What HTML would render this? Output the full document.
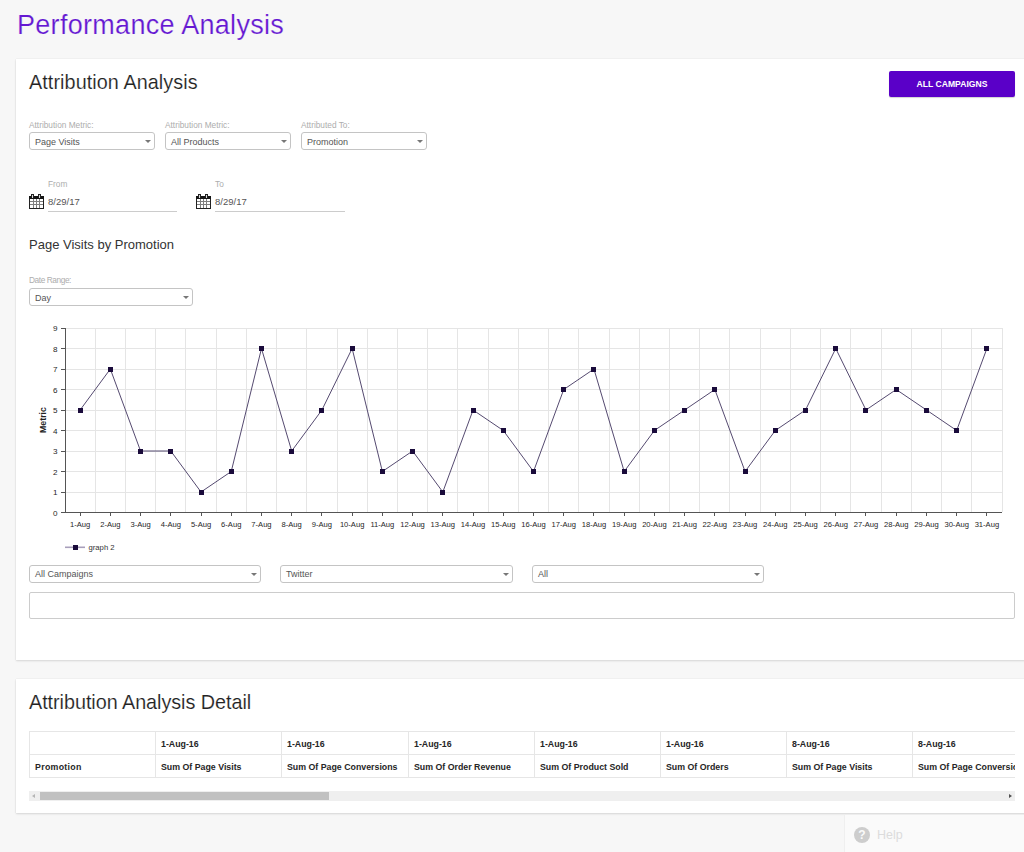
<!DOCTYPE html>
<html><head><meta charset="utf-8">
<style>
*{margin:0;padding:0;box-sizing:border-box}
html,body{width:1024px;height:852px;overflow:hidden;background:#f7f7f7;font-family:"Liberation Sans",sans-serif;color:#333}
.abs{position:absolute}
.t{position:absolute;white-space:nowrap;line-height:1}
.card{position:absolute;background:#fff;box-shadow:0 1px 2px rgba(0,0,0,.12),0 0 1px rgba(0,0,0,.12)}
.lbl{position:absolute;white-space:nowrap;font-size:8.3px;color:#adadad;line-height:1}
.tc{position:absolute;padding-left:6px;font-size:8.8px;font-weight:bold;color:#262626;white-space:nowrap;line-height:1}
.sel{position:absolute;border:1px solid #c4c4c4;border-radius:3px;background:#fff}
.sel span{position:absolute;left:5px;color:#555;white-space:nowrap;line-height:1}
.sel i{position:absolute;width:0;height:0;border-left:3px solid transparent;border-right:3px solid transparent;border-top:3px solid #777}
</style></head>
<body>
<div class="t" style="left:17px;top:12px;font-size:27px;color:#6518d2;letter-spacing:0.3px;-webkit-text-stroke:0.2px #f7f7f7">Performance Analysis</div>

<div class="card" style="left:16px;top:59px;width:1020px;height:601px"></div>
<div class="card" style="left:16px;top:679px;width:1020px;height:134px"></div>

<div class="t" style="left:29px;top:72.5px;font-size:19.8px;color:#222;letter-spacing:0.08px;-webkit-text-stroke:0.15px #fff">Attribution Analysis</div>
<div class="abs" style="left:889px;top:71px;width:126px;height:26px;background:#5a00c8;border-radius:2px;box-shadow:0 1px 1px rgba(0,0,0,.18)"></div>
<div class="t" style="left:889px;top:80px;width:126px;text-align:center;font-size:8.6px;font-weight:bold;color:#fff">ALL CAMPAIGNS</div>

<div class="lbl" style="left:29px;top:120.5px">Attribution Metric:</div>
<div class="lbl" style="left:165px;top:120.5px">Attribution Metric:</div>
<div class="lbl" style="left:301px;top:120.5px">Attributed To:</div>
<div class="sel" style="left:29px;top:132px;width:126px;height:18px"><span style="top:4.8px;font-size:9px">Page Visits</span><i style="right:3px;top:6.8px"></i></div>
<div class="sel" style="left:165px;top:132px;width:126px;height:18px"><span style="top:4.8px;font-size:9px">All Products</span><i style="right:3px;top:6.8px"></i></div>
<div class="sel" style="left:301px;top:132px;width:126px;height:18px"><span style="top:4.8px;font-size:9px">Promotion</span><i style="right:3px;top:6.8px"></i></div>

<div class="lbl" style="left:48px;top:180px">From</div>
<div class="lbl" style="left:215px;top:180px">To</div>
<div class="abs" style="left:29px;top:194px"><svg width="15" height="15" viewBox="0 0 15 15" shape-rendering="crispEdges"><path d="M0.5 3V14.5H14.5V3" stroke="#222" fill="none"/><rect x="0" y="2" width="15" height="3" fill="#151515"/><g stroke="#808080"><path d="M4.5 5V14M7.5 5V14M10.5 5V14M1 7.5H14M1 10.5H14"/></g><rect x="2" y="0" width="3" height="4" fill="#222"/><rect x="9" y="0" width="3" height="4" fill="#222"/><rect x="3" y="1" width="1" height="3" fill="#ddd"/><rect x="10" y="1" width="1" height="3" fill="#ddd"/></svg></div>
<div class="abs" style="left:196px;top:194px"><svg width="15" height="15" viewBox="0 0 15 15" shape-rendering="crispEdges"><path d="M0.5 3V14.5H14.5V3" stroke="#222" fill="none"/><rect x="0" y="2" width="15" height="3" fill="#151515"/><g stroke="#808080"><path d="M4.5 5V14M7.5 5V14M10.5 5V14M1 7.5H14M1 10.5H14"/></g><rect x="2" y="0" width="3" height="4" fill="#222"/><rect x="9" y="0" width="3" height="4" fill="#222"/><rect x="3" y="1" width="1" height="3" fill="#ddd"/><rect x="10" y="1" width="1" height="3" fill="#ddd"/></svg></div>
<div class="t" style="left:48px;top:197px;font-size:9.5px;color:#555">8/29/17</div>
<div class="t" style="left:215px;top:197px;font-size:9.5px;color:#555">8/29/17</div>
<div class="abs" style="left:48px;top:211px;width:129px;height:1px;background:#ccc"></div>
<div class="abs" style="left:215px;top:211px;width:130px;height:1px;background:#ccc"></div>

<div class="t" style="left:29px;top:238px;font-size:13px;color:#333">Page Visits by Promotion</div>
<div class="lbl" style="left:29px;top:276px;letter-spacing:-0.42px">Date Range:</div>
<div class="sel" style="left:29px;top:288px;width:164px;height:18px"><span style="top:4.8px;font-size:9px">Day</span><i style="right:3px;top:6.8px"></i></div>

<svg class="abs" style="left:0;top:0" width="1024" height="600" viewBox="0 0 1024 600">
<path d="M95.5 328V512M125.5 328V512M155.5 328V512M185.5 328V512M216.5 328V512M246.5 328V512M276.5 328V512M306.5 328V512M337.5 328V512M367.5 328V512M397.5 328V512M427.5 328V512M457.5 328V512M488.5 328V512M518.5 328V512M548.5 328V512M578.5 328V512M609.5 328V512M639.5 328V512M669.5 328V512M699.5 328V512M729.5 328V512M760.5 328V512M790.5 328V512M820.5 328V512M850.5 328V512M881.5 328V512M911.5 328V512M941.5 328V512M971.5 328V512M1002.5 328V512M65 492.5H1002.5M65 471.5H1002.5M65 451.5H1002.5M65 430.5H1002.5M65 410.5H1002.5M65 389.5H1002.5M65 369.5H1002.5M65 348.5H1002.5M65 328.5H1002.5" stroke="#e5e5e5" stroke-width="1" fill="none" shape-rendering="crispEdges"/>
<path d="M65.5 328V512.5H1002M80.5 512.5v3.5M110.5 512.5v3.5M140.5 512.5v3.5M170.5 512.5v3.5M201.5 512.5v3.5M231.5 512.5v3.5M261.5 512.5v3.5M291.5 512.5v3.5M321.5 512.5v3.5M352.5 512.5v3.5M382.5 512.5v3.5M412.5 512.5v3.5M442.5 512.5v3.5M473.5 512.5v3.5M503.5 512.5v3.5M533.5 512.5v3.5M563.5 512.5v3.5M593.5 512.5v3.5M624.5 512.5v3.5M654.5 512.5v3.5M684.5 512.5v3.5M714.5 512.5v3.5M745.5 512.5v3.5M775.5 512.5v3.5M805.5 512.5v3.5M835.5 512.5v3.5M865.5 512.5v3.5M896.5 512.5v3.5M926.5 512.5v3.5M956.5 512.5v3.5M986.5 512.5v3.5M61 512.5H65.5M61 492.5H65.5M61 471.5H65.5M61 451.5H65.5M61 430.5H65.5M61 410.5H65.5M61 389.5H65.5M61 369.5H65.5M61 348.5H65.5M61 328.5H65.5" stroke="#555" stroke-width="1" fill="none" shape-rendering="crispEdges"/>
<polyline fill="none" stroke="#554a70" stroke-width="1" points="80.11,410.00 110.34,369.00 140.56,451.00 170.79,451.00 201.02,492.00 231.24,471.50 261.47,348.50 291.69,451.00 321.92,410.00 352.15,348.50 382.37,471.50 412.60,451.00 442.82,492.00 473.05,410.00 503.27,430.50 533.50,471.50 563.73,389.50 593.95,369.00 624.18,471.50 654.40,430.50 684.63,410.00 714.85,389.50 745.08,471.50 775.31,430.50 805.53,410.00 835.76,348.50 865.98,410.00 896.21,389.50 926.44,410.00 956.66,430.50 986.89,348.50"/>
<g fill="#1a0b3b"><rect x="78" y="408" width="5" height="5"/><rect x="108" y="367" width="5" height="5"/><rect x="138" y="449" width="5" height="5"/><rect x="168" y="449" width="5" height="5"/><rect x="199" y="490" width="5" height="5"/><rect x="229" y="469" width="5" height="5"/><rect x="259" y="346" width="5" height="5"/><rect x="289" y="449" width="5" height="5"/><rect x="319" y="408" width="5" height="5"/><rect x="350" y="346" width="5" height="5"/><rect x="380" y="469" width="5" height="5"/><rect x="410" y="449" width="5" height="5"/><rect x="440" y="490" width="5" height="5"/><rect x="471" y="408" width="5" height="5"/><rect x="501" y="428" width="5" height="5"/><rect x="531" y="469" width="5" height="5"/><rect x="561" y="387" width="5" height="5"/><rect x="591" y="367" width="5" height="5"/><rect x="622" y="469" width="5" height="5"/><rect x="652" y="428" width="5" height="5"/><rect x="682" y="408" width="5" height="5"/><rect x="712" y="387" width="5" height="5"/><rect x="743" y="469" width="5" height="5"/><rect x="773" y="428" width="5" height="5"/><rect x="803" y="408" width="5" height="5"/><rect x="833" y="346" width="5" height="5"/><rect x="863" y="408" width="5" height="5"/><rect x="894" y="387" width="5" height="5"/><rect x="924" y="408" width="5" height="5"/><rect x="954" y="428" width="5" height="5"/><rect x="984" y="346" width="5" height="5"/></g>
<g font-family="Liberation Sans" font-size="7.6" fill="#262626" text-anchor="middle"><text x="80.11" y="527.3">1-Aug</text><text x="110.34" y="527.3">2-Aug</text><text x="140.56" y="527.3">3-Aug</text><text x="170.79" y="527.3">4-Aug</text><text x="201.02" y="527.3">5-Aug</text><text x="231.24" y="527.3">6-Aug</text><text x="261.47" y="527.3">7-Aug</text><text x="291.69" y="527.3">8-Aug</text><text x="321.92" y="527.3">9-Aug</text><text x="352.15" y="527.3">10-Aug</text><text x="382.37" y="527.3">11-Aug</text><text x="412.60" y="527.3">12-Aug</text><text x="442.82" y="527.3">13-Aug</text><text x="473.05" y="527.3">14-Aug</text><text x="503.27" y="527.3">15-Aug</text><text x="533.50" y="527.3">16-Aug</text><text x="563.73" y="527.3">17-Aug</text><text x="593.95" y="527.3">18-Aug</text><text x="624.18" y="527.3">19-Aug</text><text x="654.40" y="527.3">20-Aug</text><text x="684.63" y="527.3">21-Aug</text><text x="714.85" y="527.3">22-Aug</text><text x="745.08" y="527.3">23-Aug</text><text x="775.31" y="527.3">24-Aug</text><text x="805.53" y="527.3">25-Aug</text><text x="835.76" y="527.3">26-Aug</text><text x="865.98" y="527.3">27-Aug</text><text x="896.21" y="527.3">28-Aug</text><text x="926.44" y="527.3">29-Aug</text><text x="956.66" y="527.3">30-Aug</text><text x="986.89" y="527.3">31-Aug</text></g>
<g font-family="Liberation Sans" font-size="8.1" fill="#262626" text-anchor="end"><text x="57.4" y="515.60">0</text><text x="57.4" y="495.10">1</text><text x="57.4" y="474.60">2</text><text x="57.4" y="454.10">3</text><text x="57.4" y="433.60">4</text><text x="57.4" y="413.10">5</text><text x="57.4" y="392.60">6</text><text x="57.4" y="372.10">7</text><text x="57.4" y="351.60">8</text><text x="57.4" y="331.10">9</text></g>
<text transform="translate(46,420) rotate(-90)" font-family="Liberation Sans" font-size="8.8" font-weight="bold" fill="#222" text-anchor="middle">Metric</text>
<path d="M65 547.3H85" stroke="#a89fbb" stroke-width="1.6"/>
<rect x="73" y="545" width="5" height="5" fill="#1a0b3b"/>
<text x="88.5" y="550" font-family="Liberation Sans" font-size="7.7" fill="#333">graph 2</text>
</svg>

<div class="sel" style="left:29px;top:565px;width:232px;height:18px"><span style="top:4.0px;font-size:9px">All Campaigns</span><i style="right:3px;top:6.8px"></i></div>
<div class="sel" style="left:280px;top:565px;width:233px;height:18px"><span style="top:4.0px;font-size:9px">Twitter</span><i style="right:3px;top:6.8px"></i></div>
<div class="sel" style="left:532px;top:565px;width:232px;height:18px"><span style="top:4.0px;font-size:9px">All</span><i style="right:3px;top:6.8px"></i></div>
<div class="abs" style="left:29px;top:592px;width:986px;height:27px;border:1px solid #ccc;border-radius:2px"></div>

<div class="t" style="left:29px;top:692.5px;font-size:19.8px;color:#222;letter-spacing:-0.04px;-webkit-text-stroke:0.15px #fff">Attribution Analysis Detail</div>

<div class="abs" style="left:29px;top:731px;width:986px;height:71px;overflow:hidden">
<div class="abs" style="left:0;top:0;width:1100px;height:1px;background:#e6e6e6"></div>
<div class="abs" style="left:0;top:23px;width:1100px;height:1px;background:#e6e6e6"></div>
<div class="abs" style="left:0;top:46px;width:1100px;height:1px;background:#e6e6e6"></div>
<div class="abs" style="left:0;top:0;width:1px;height:47px;background:#e6e6e6"></div>
<div class="tc" style="left:0px;top:9px"></div><div class="tc" style="left:0px;top:32px;letter-spacing:0.3px">Promotion</div><div class="tc" style="left:126px;top:9px">1-Aug-16</div><div class="tc" style="left:126px;top:32px">Sum Of Page Visits</div><div class="abs" style="left:126px;top:0;width:1px;height:47px;background:#e6e6e6"></div><div class="tc" style="left:252px;top:9px">1-Aug-16</div><div class="tc" style="left:252px;top:32px">Sum Of Page Conversions</div><div class="abs" style="left:252px;top:0;width:1px;height:47px;background:#e6e6e6"></div><div class="tc" style="left:379px;top:9px">1-Aug-16</div><div class="tc" style="left:379px;top:32px">Sum Of Order Revenue</div><div class="abs" style="left:379px;top:0;width:1px;height:47px;background:#e6e6e6"></div><div class="tc" style="left:505px;top:9px">1-Aug-16</div><div class="tc" style="left:505px;top:32px">Sum Of Product Sold</div><div class="abs" style="left:505px;top:0;width:1px;height:47px;background:#e6e6e6"></div><div class="tc" style="left:631px;top:9px">1-Aug-16</div><div class="tc" style="left:631px;top:32px">Sum Of Orders</div><div class="abs" style="left:631px;top:0;width:1px;height:47px;background:#e6e6e6"></div><div class="tc" style="left:757px;top:9px">8-Aug-16</div><div class="tc" style="left:757px;top:32px">Sum Of Page Visits</div><div class="abs" style="left:757px;top:0;width:1px;height:47px;background:#e6e6e6"></div><div class="tc" style="left:883px;top:9px">8-Aug-16</div><div class="tc" style="left:883px;top:32px">Sum Of Page Conversions</div><div class="abs" style="left:883px;top:0;width:1px;height:47px;background:#e6e6e6"></div>
<div class="abs" style="left:0;top:60px;width:986px;height:10px;background:#efefef"></div>
<div class="abs" style="left:11px;top:61px;width:289px;height:8px;background:#c1c1c1"></div>
<div class="abs" style="left:3px;top:63px;width:0;height:0;border-top:2px solid transparent;border-bottom:2px solid transparent;border-right:3px solid #b5b5b5"></div>
<div class="abs" style="left:980px;top:63px;width:0;height:0;border-top:2px solid transparent;border-bottom:2px solid transparent;border-left:3px solid #505050"></div>
</div>
<div class="abs" style="left:844px;top:815px;width:180px;height:37px;background:#fafafa;border-left:1px solid #efefef"></div>
<div class="abs" style="left:854px;top:827px;width:16px;height:16px;border-radius:50%;background:#cdcdcd;color:#fafafa;font-weight:bold;font-size:12px;line-height:16px;text-align:center">?</div>
<div class="t" style="left:877px;top:828.5px;font-size:12.5px;color:#dcdcdc">Help</div>
</body></html>
